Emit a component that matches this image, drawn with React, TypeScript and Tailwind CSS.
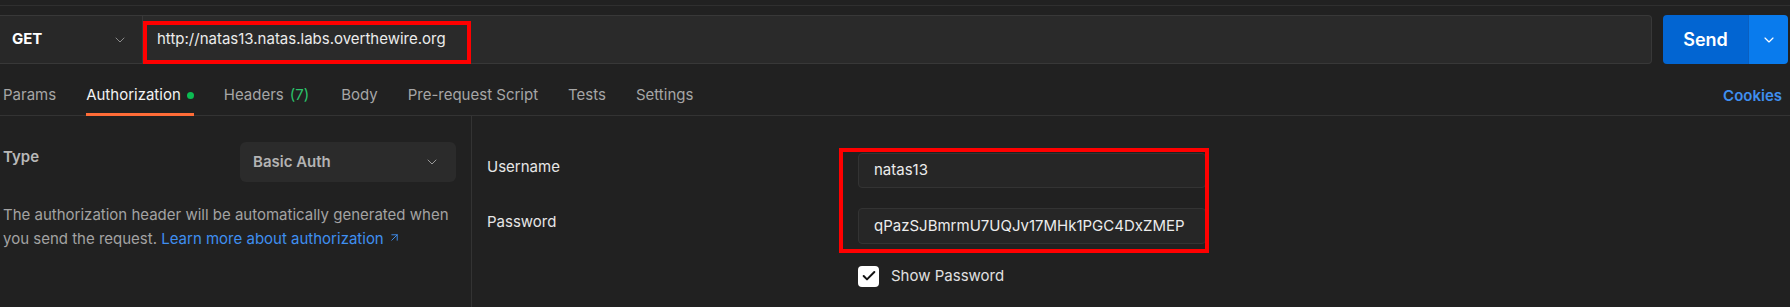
import { ChevronDown, ArrowUpRight, Check } from "lucide-react";

const tabs = [
  { label: "Params" },
  { label: "Authorization", active: true, dot: true },
  { label: "Headers", count: "(7)" },
  { label: "Body", extra: true },
  { label: "Pre-request Script" },
  { label: "Tests" },
  { label: "Settings" },
];

export default function App() {
  return (
    <div className="w-[1790px] h-[307px] overflow-hidden bg-[#212121] font-['Inter',sans-serif] text-[15px]">
      {/* top strip */}
      <div className="h-[6px] border-b border-[#2f2f2f]" />

      {/* request bar */}
      <div className="flex items-stretch mt-[9px] h-[49px] pr-[2px]">
        <div className="flex flex-1">
          <div className="w-[143px] flex items-center justify-between pl-[12px] pr-[14px] bg-[#282828] border border-l-0 border-[#383838]">
            <span className="font-bold text-white text-[15px]">GET</span>
            <ChevronDown size={16} strokeWidth={1.5} className="text-[#8a8a8a]" />
          </div>
          <div className="relative flex-1 flex items-center pl-[14px] bg-[#2a2a2a] border border-l-0 border-[#383838] rounded-r-[4px]">
            <span className="text-[#ececec] text-[15px]">http://natas13.natas.labs.overthewire.org</span>
            <div className="absolute left-0 top-[5px] w-[328px] h-[43px] border-[4px] border-[#ff0000]" />
          </div>
        </div>
        <div className="ml-[11px] flex w-[125px] rounded-[4px] overflow-hidden">
          <div className="flex-1 flex items-center justify-center bg-[#0265d2] text-white font-semibold text-[18px]">
            Send
          </div>
          <div className="w-[40px] flex items-center justify-center bg-[#097bed] border-l border-[#0a5fc0]">
            <ChevronDown size={16} strokeWidth={1.75} className="text-white" />
          </div>
        </div>
      </div>

      {/* tabs */}
      <div className="flex items-stretch h-[52px] border-b border-[#333333]">
        <div className="flex items-stretch gap-[30px] pl-[3px] pt-[14px]">
          {tabs.map((t) => (
            <div
              key={t.label}
              className={`flex items-center gap-[6px] -mb-px border-b-[3px] ${
                t.active ? "border-[#ff6c37] text-[#f2f2f2]" : "border-transparent text-[#a6a6a6]"
              } ${t.extra ? "ml-[2px]" : ""}`}
            >
              <span>{t.label}</span>
              {t.count && <span className="text-[#2bc36b]">{t.count}</span>}
              {t.dot && <span className="w-[7px] h-[7px] rounded-full bg-[#0cbb52]" />}
            </div>
          ))}
        </div>
        <div className="flex-1" />
        <div className="flex items-center pt-[14px] pr-[8px] text-[#3f8ff0] font-semibold">Cookies</div>
      </div>

      {/* content */}
      <div className="flex h-[191px]">
        <div className="w-[472px] border-r border-[#333333] pl-[3px] pr-[15px] pt-[26px]">
          <div className="flex justify-between items-start">
            <span className="mt-[3px] leading-[24px] font-semibold text-[#b8b8b8]">Type</span>
            <div className="w-[216px] h-[40px] flex items-center justify-between pl-[13px] pr-[16px] rounded-md bg-[#2b2b2b]">
              <span className="font-semibold text-[#b3b3b3]">Basic Auth</span>
              <ChevronDown size={16} strokeWidth={1.5} className="text-[#9a9a9a]" />
            </div>
          </div>
          <p className="mt-[21px] leading-[24px] text-[#a3a3a3]">
            The authorization header will be automatically generated when you send the request.{" "}
            <span className="text-[#3f8ff0]">
              Learn more about authorization
              <ArrowUpRight size={13} strokeWidth={1.75} className="inline ml-[4px] -mt-[4px]" />
            </span>
          </p>
        </div>

        <div className="flex-1 pl-[15px] pt-[37px]">
          <div className="flex">
            <div className="w-[371px] text-[#e6e6e6]">
              <div className="h-[35px] flex items-center -mt-[3px]">Username</div>
              <div className="h-[35px] flex items-center mt-[20px]">Password</div>
            </div>
            <div>
              <div className="relative w-[348px] flex flex-col gap-[20px]">
                <div className="h-[35px] flex items-center pl-[15px] bg-[#262626] border border-[#333333] rounded-[4px] text-[#ececec]">
                  natas13
                </div>
                <div className="h-[36px] flex items-center pl-[15px] bg-[#262626] border border-[#333333] rounded-[4px] text-[#ececec]">
                  qPazSJBmrmU7UQJv17MHk1PGC4DxZMEP
                </div>
                <div className="absolute -left-[19px] -top-[5px] w-[370px] h-[105px] border-[4px] border-[#ff0000]" />
              </div>
              <div className="flex items-center gap-[12px] mt-[21px]">
                <div className="w-[21px] h-[21px] rounded-[4px] bg-white flex items-center justify-center">
                  <Check size={16} strokeWidth={3} className="text-[#111]" />
                </div>
                <span className="text-[#e0e0e0]">Show Password</span>
              </div>
            </div>
          </div>
        </div>
      </div>
    </div>
  );
}
